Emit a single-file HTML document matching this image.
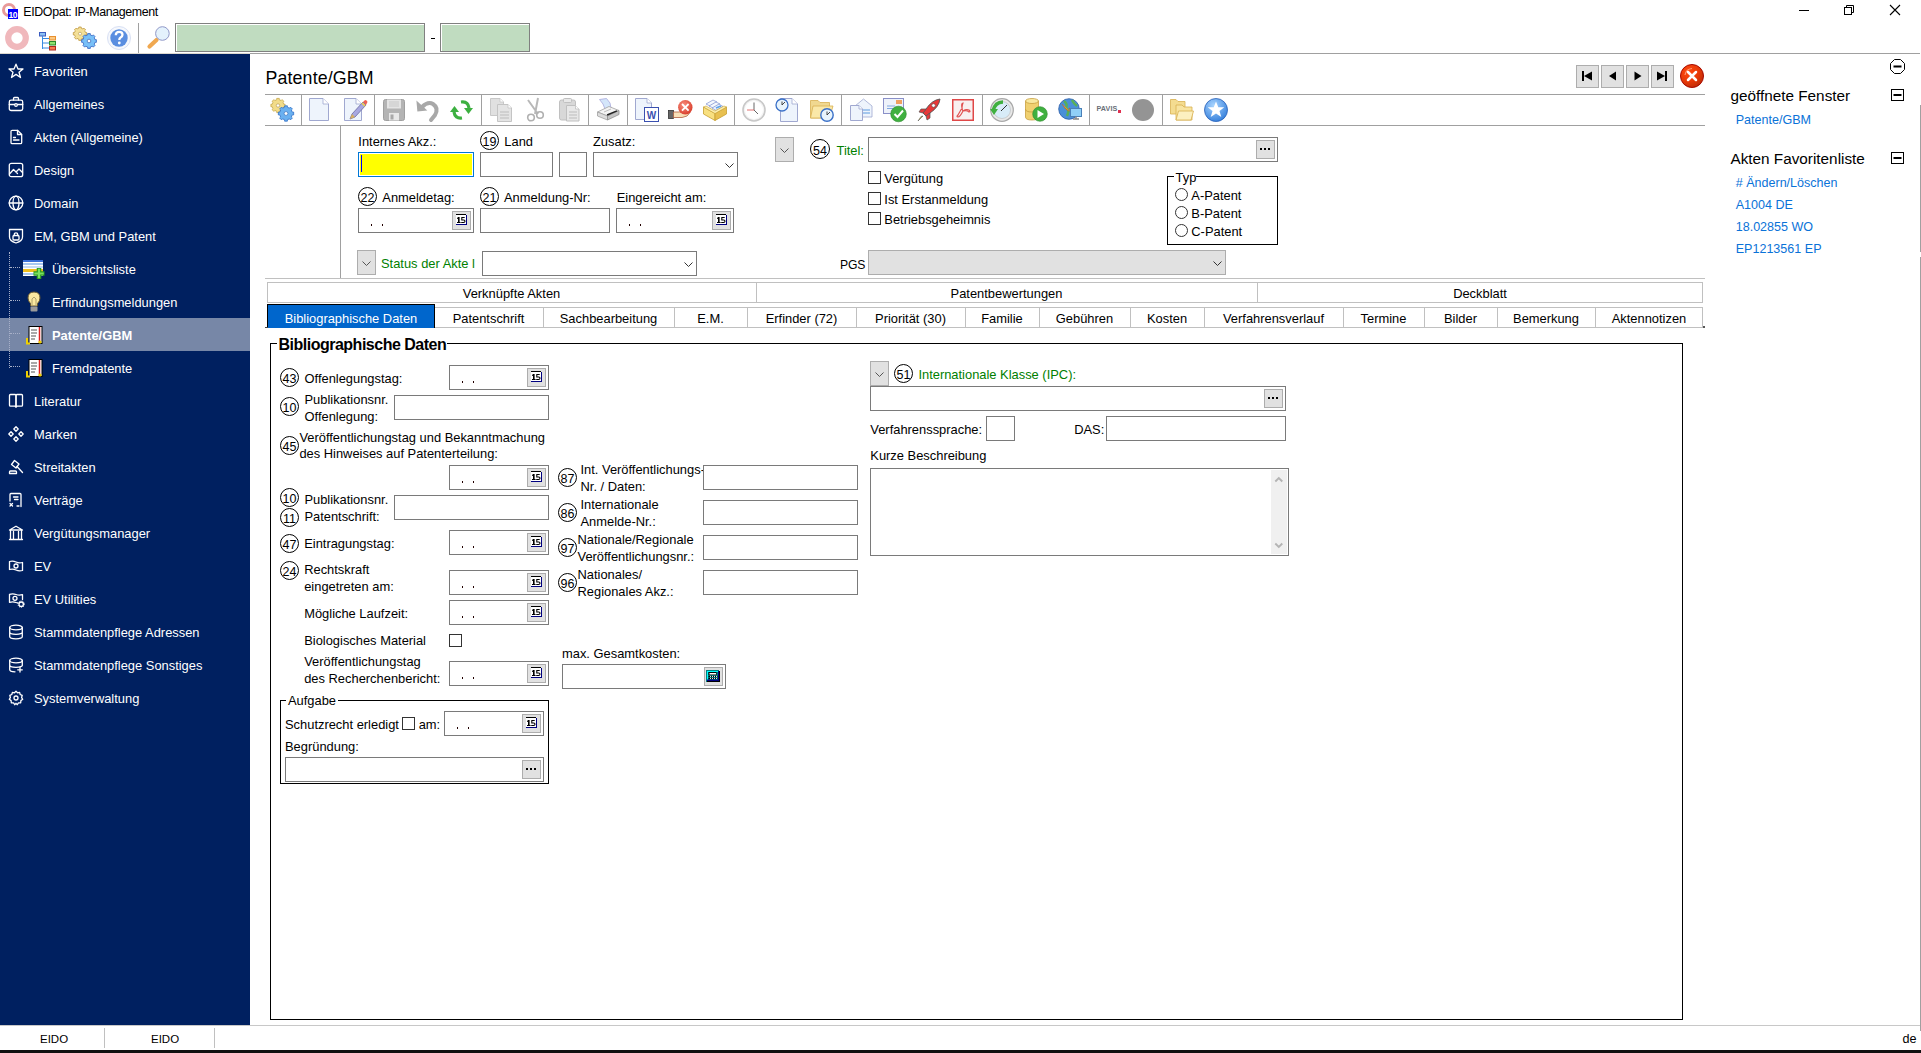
<!DOCTYPE html>
<html><head><meta charset="utf-8"><title>EIDOpat: IP-Management</title>
<style>
html,body{margin:0;padding:0;}
body{width:1921px;height:1053px;overflow:hidden;position:relative;background:#fff;font-family:"Liberation Sans", sans-serif;}
.t{position:absolute;white-space:nowrap;line-height:1;}
.r{position:absolute;box-sizing:border-box;}
svg.r{overflow:visible;}
</style></head><body>
<svg class="r" style="left:2px;top:3px;" width="17" height="17" viewBox="0 0 17 17"><circle cx="7" cy="7" r="5.5" fill="none" stroke="#e89a9a" stroke-width="3"/><rect x="6" y="6" width="10" height="10" fill="#0000ff"/><text x="6.6" y="14.6" font-family="Liberation Sans" font-size="8.5" font-weight="bold" fill="#fff" letter-spacing="-0.6">10</text></svg>
<div class="t " style="left:23.3px;top:5.70px;font-size:12.4px;color:#000;letter-spacing:-0.36px;">EIDOpat: IP-Management</div>
<div class="r" style="left:1799px;top:10px;width:10px;height:1px;background:#000;"></div>
<svg class="r" style="left:1844px;top:5px;" width="11" height="11" viewBox="0 0 11 11"><path d="M2.5 2.5V0.5H9.5V7.5H7.5" fill="none" stroke="#000" stroke-width="1"/><rect x="0.5" y="2.5" width="7" height="7" fill="none" stroke="#000" stroke-width="1"/></svg>
<svg class="r" style="left:1890px;top:5px;" width="11" height="11" viewBox="0 0 11 11"><path d="M0 0L10 10M10 0L0 10" stroke="#000" stroke-width="1.1"/></svg>
<svg class="r" style="left:5px;top:26px;" width="24" height="24" viewBox="0 0 24 24"><circle cx="12" cy="12" r="8.8" fill="none" stroke="#f0b8bc" stroke-width="6.2"/></svg>
<svg class="r" style="left:39px;top:32px;" width="18" height="19" viewBox="0 0 18 19"><rect x="0.5" y="0.5" width="6" height="3.5" fill="#8cc0f4" stroke="#3a5cc0" stroke-width="1"/><path d="M3.5 4V17M3.5 6.5H10M3.5 11H10M3.5 16H10" stroke="#3a8ae0" stroke-width="1"/><rect x="10.5" y="4.5" width="6" height="3.5" fill="#fcc880" stroke="#e89030" stroke-width="1"/><rect x="10.5" y="9.5" width="6" height="3.5" fill="#90e070" stroke="#2a8a2a" stroke-width="1"/><rect x="10.5" y="14.5" width="6" height="3.5" fill="#f87850" stroke="#b02a20" stroke-width="1"/></svg>
<svg class="r" style="left:73px;top:27px;" width="25" height="24" viewBox="0 0 25 24"><path d="M13.69 5.48L13.69 7.92L12.47 7.88L11.71 9.73L12.59 10.57L10.87 12.29L10.03 11.41L8.18 12.17L8.22 13.39L5.78 13.39L5.82 12.17L3.97 11.41L3.13 12.29L1.41 10.57L2.29 9.73L1.53 7.88L0.31 7.92L0.31 5.48L1.53 5.52L2.29 3.67L1.41 2.83L3.13 1.11L3.97 1.99L5.82 1.23L5.78 0.01L8.22 0.01L8.18 1.23L10.03 1.99L10.87 1.11L12.59 2.83L11.71 3.67L12.47 5.52Z" fill="#f4e098" stroke="#c09840" stroke-width="0.8"/><circle cx="7" cy="6.7" r="1.5" fill="#fff" stroke="#a08030" stroke-width="0.5"/><path d="M23.38 12.66L23.38 15.34L22.06 15.31L21.21 17.36L22.17 18.27L20.27 20.17L19.36 19.21L17.31 20.06L17.34 21.38L14.66 21.38L14.69 20.06L12.64 19.21L11.73 20.17L9.83 18.27L10.79 17.36L9.94 15.31L8.62 15.34L8.62 12.66L9.94 12.69L10.79 10.64L9.83 9.73L11.73 7.83L12.64 8.79L14.69 7.94L14.66 6.62L17.34 6.62L17.31 7.94L19.36 8.79L20.27 7.83L22.17 9.73L21.21 10.64L22.06 12.69Z" fill="#78c0f8" stroke="#3060c0" stroke-width="0.8"/><circle cx="16" cy="14" r="1.8" fill="#fff" stroke="#2850a8" stroke-width="0.6"/></svg>
<svg class="r" style="left:107px;top:26px;" width="24" height="24" viewBox="0 0 24 24"><circle cx="12" cy="12" r="11.5" fill="#f6f8fc" stroke="#d8e0f4" stroke-width="1"/><circle cx="12" cy="12" r="8.7" fill="#5a8ee0"/><path d="M8.8 9.3Q8.8 5.8 12.2 5.8Q15.5 5.8 15.5 8.8Q15.5 10.5 13.3 11.7Q12.3 12.3 12.3 14" stroke="#fff" stroke-width="2.3" fill="none"/><circle cx="12.3" cy="17" r="1.4" fill="#fff"/></svg>
<div class="r" style="left:138px;top:23px;width:1px;height:30px;background:#a0a0a0;"></div>
<svg class="r" style="left:147px;top:26px;" width="24" height="24" viewBox="0 0 24 24"><path d="M2.5 20.5L9.5 14" stroke="#f0a850" stroke-width="4.2" stroke-linecap="round"/><circle cx="15.4" cy="7.5" r="6.8" fill="#e4f2fc" stroke="#9098c8" stroke-width="1"/></svg>
<div class="r" style="left:175px;top:23px;width:250px;height:29px;background:#c0dcc0;box-sizing:border-box;border:1px solid #808080;"></div>
<div class="r" style="left:176px;top:24px;width:248px;height:1px;background:#fff;"></div>
<div class="r" style="left:176px;top:24px;width:1px;height:27px;background:#fff;"></div>
<div class="r" style="left:431px;top:38px;width:4px;height:1px;background:#000;"></div>
<div class="r" style="left:440px;top:23px;width:90px;height:29px;background:#c0dcc0;box-sizing:border-box;border:1px solid #808080;"></div>
<div class="r" style="left:441px;top:24px;width:88px;height:1px;background:#fff;"></div>
<div class="r" style="left:441px;top:24px;width:1px;height:27px;background:#fff;"></div>
<div class="r" style="left:250px;top:53px;width:1670px;height:1px;background:#a0a0a0;"></div>
<div class="r" style="left:0px;top:53px;width:250px;height:1px;background:#dcd8d0;"></div>
<div class="r" style="left:0px;top:1025px;width:1921px;height:1px;background:#c8c8c8;"></div>
<div class="t " style="left:40px;top:1034.27px;font-size:11.5px;color:#000;">EIDO</div>
<div class="r" style="left:104px;top:1028px;width:1px;height:20px;background:#c0c0c0;"></div>
<div class="t " style="left:151px;top:1034.27px;font-size:11.5px;color:#000;">EIDO</div>
<div class="r" style="left:214px;top:1028px;width:1px;height:20px;background:#c0c0c0;"></div>
<div class="t " style="left:1902.5px;top:1033.33px;font-size:12.6px;color:#000;">de</div>
<div class="r" style="left:0px;top:1050px;width:1921px;height:3px;background:#101010;"></div>
<div class="r" style="left:1920px;top:105px;width:1px;height:147px;background:#a0a0a0;"></div>
<div class="r" style="left:1920px;top:257px;width:1px;height:774px;background:#a0a0a0;"></div>
<div class="r" style="left:0px;top:54px;width:250px;height:971px;background:#002060;"></div>
<div class="r" style="left:0px;top:318px;width:250px;height:33px;background:#7787a7;"></div>
<div class="r" style="left:9px;top:252px;width:1px;height:116px;border-left:1px dotted #a8b0c8;"></div>
<div class="r" style="left:10px;top:267px;width:10px;height:1px;border-top:1px dotted #a8b0c8;"></div>
<div class="r" style="left:10px;top:300px;width:10px;height:1px;border-top:1px dotted #a8b0c8;"></div>
<div class="r" style="left:10px;top:333px;width:10px;height:1px;border-top:1px dotted #a8b0c8;"></div>
<div class="r" style="left:10px;top:366px;width:10px;height:1px;border-top:1px dotted #a8b0c8;"></div>
<svg class="r" style="left:8px;top:63px;" width="16" height="16" viewBox="0 0 16 16"><path d="M8 1.2L10 6H15L11 9.2L12.5 14.5L8 11.4L3.5 14.5L5 9.2L1 6H6Z" stroke="#fff" stroke-width="1.3" fill="none" stroke-linejoin="round" stroke-linecap="round"/></svg>
<div class="t " style="left:34px;top:66.08px;font-size:12.9px;color:#fff;">Favoriten</div>
<svg class="r" style="left:8px;top:96px;" width="16" height="16" viewBox="0 0 16 16"><path d="M5.5 4V2.5Q5.5 1.5 6.5 1.5H9.5Q10.5 1.5 10.5 2.5V4" stroke="#fff" stroke-width="1.3" fill="none" stroke-linejoin="round" stroke-linecap="round"/><rect x="1.3" y="4.2" width="13.4" height="10.3" rx="1.8" stroke="#fff" stroke-width="1.3" fill="none" stroke-linejoin="round" stroke-linecap="round"/><path d="M1.3 8.5H6.5M9.5 8.5H14.7" stroke="#fff" stroke-width="1.3" fill="none" stroke-linejoin="round" stroke-linecap="round"/><circle cx="8" cy="9" r="1.3" stroke="#fff" stroke-width="1.3" fill="none" stroke-linejoin="round" stroke-linecap="round"/></svg>
<div class="t " style="left:34px;top:99.08px;font-size:12.9px;color:#fff;">Allgemeines</div>
<svg class="r" style="left:8px;top:129px;" width="16" height="16" viewBox="0 0 16 16"><path d="M3 2.5Q3 1.3 4.2 1.3H9.5L13.7 5.5V13.5Q13.7 14.7 12.5 14.7H4.2Q3 14.7 3 13.5Z" stroke="#fff" stroke-width="1.3" fill="none" stroke-linejoin="round" stroke-linecap="round"/><path d="M9.5 1.5V5.5H13.5" stroke="#fff" stroke-width="1.3" fill="none" stroke-linejoin="round" stroke-linecap="round"/><path d="M5.5 8.5H7.5M5.5 11H11" stroke="#fff" stroke-width="1.3" fill="none" stroke-linejoin="round" stroke-linecap="round"/></svg>
<div class="t " style="left:34px;top:132.08px;font-size:12.9px;color:#fff;">Akten (Allgemeine)</div>
<svg class="r" style="left:8px;top:162px;" width="16" height="16" viewBox="0 0 16 16"><rect x="1.3" y="1.3" width="13.4" height="13.4" rx="2" stroke="#fff" stroke-width="1.3" fill="none" stroke-linejoin="round" stroke-linecap="round"/><path d="M1.5 12L5.5 7.5L9.5 11.5M8 10L11 7L14.5 10.5" stroke="#fff" stroke-width="1.3" fill="none" stroke-linejoin="round" stroke-linecap="round"/></svg>
<div class="t " style="left:34px;top:165.08px;font-size:12.9px;color:#fff;">Design</div>
<svg class="r" style="left:8px;top:195px;" width="16" height="16" viewBox="0 0 16 16"><circle cx="8" cy="8" r="6.8" stroke="#fff" stroke-width="1.3" fill="none" stroke-linejoin="round" stroke-linecap="round"/><ellipse cx="8" cy="8" rx="3" ry="6.8" stroke="#fff" stroke-width="1.3" fill="none" stroke-linejoin="round" stroke-linecap="round"/><path d="M1.2 8H14.8" stroke="#fff" stroke-width="1.3" fill="none" stroke-linejoin="round" stroke-linecap="round"/></svg>
<div class="t " style="left:34px;top:198.08px;font-size:12.9px;color:#fff;">Domain</div>
<svg class="r" style="left:8px;top:228px;" width="16" height="16" viewBox="0 0 16 16"><path d="M1.5 1.5H14.5V9Q14.5 13 8 15Q1.5 13 1.5 9Z" stroke="#fff" stroke-width="1.3" fill="none" stroke-linejoin="round" stroke-linecap="round"/><rect x="5" y="7.5" width="6" height="4.5" rx="1" stroke="#fff" stroke-width="1.3" fill="none" stroke-linejoin="round" stroke-linecap="round"/><path d="M6.3 7.5V6.3Q6.3 4.8 8 4.8Q9.7 4.8 9.7 6.3V7.5" stroke="#fff" stroke-width="1.3" fill="none" stroke-linejoin="round" stroke-linecap="round"/></svg>
<div class="t " style="left:34px;top:231.08px;font-size:12.9px;color:#fff;">EM, GBM und Patent</div>
<svg class="r" style="left:23px;top:260px;" width="23" height="20" viewBox="0 0 23 20"><rect x="0" y="0" width="20" height="16" fill="#fff"/><rect x="0" y="0" width="20" height="2" fill="#3a70d8"/><rect x="0" y="3" width="20" height="2" fill="#a8c8f0"/><rect x="0" y="6" width="20" height="2" fill="#c8dcf4"/><rect x="0" y="9" width="20" height="3" fill="#f0c020"/><rect x="0" y="13" width="20" height="2" fill="#a8c8f0"/><path d="M16 8V19M10.5 13.5H21.5" stroke="#2a9a20" stroke-width="4.5"/><path d="M16 8.8V18.2M11.3 13.5H20.7" stroke="#7ae060" stroke-width="2.2"/></svg>
<div class="t " style="left:52px;top:264.08px;font-size:12.9px;color:#fff;">Übersichtsliste</div>
<svg class="r" style="left:27px;top:291px;" width="14" height="23" viewBox="0 0 14 23"><path d="M7 1Q13 1 13 7Q13 10 10.5 12.5V15H3.5V12.5Q1 10 1 7Q1 1 7 1Z" fill="#fbe9a0" stroke="#6a5a30" stroke-width="1"/><path d="M5 14V8L7 6L9 8V14" stroke="#a09060" fill="none" stroke-width="0.8"/><rect x="3.5" y="15.5" width="7" height="5" rx="1" fill="#9a9a9a"/></svg>
<div class="t " style="left:52px;top:297.08px;font-size:12.9px;color:#fff;">Erfindungsmeldungen</div>
<svg class="r" style="left:26px;top:326px;" width="18" height="19" viewBox="0 0 18 19"><rect x="3" y="0.5" width="13" height="17" fill="#fff" stroke="#000" stroke-width="1"/><path d="M13.5 1V17" stroke="#e02020" stroke-width="1.5"/><path d="M5 4H11M5 7H11M5 10H10M5 13H9" stroke="#555" stroke-width="1.2"/><path d="M1 12V17.5H4" stroke="#f0d000" stroke-width="2" fill="none"/><circle cx="14" cy="16" r="1.6" fill="#f0d000"/></svg>
<div class="t " style="left:52px;top:330.08px;font-size:12.9px;color:#fff;font-weight:bold;">Patente/GBM</div>
<svg class="r" style="left:26px;top:359px;" width="18" height="19" viewBox="0 0 18 19"><rect x="3" y="0.5" width="13" height="17" fill="#fff" stroke="#000" stroke-width="1"/><path d="M13.5 1V17" stroke="#e02020" stroke-width="1.5"/><path d="M5 4H11M5 7H11M5 10H10M5 13H9" stroke="#555" stroke-width="1.2"/><path d="M1 12V17.5H4" stroke="#f0d000" stroke-width="2" fill="none"/><circle cx="14" cy="16" r="1.6" fill="#f0d000"/></svg>
<div class="t " style="left:52px;top:363.08px;font-size:12.9px;color:#fff;">Fremdpatente</div>
<svg class="r" style="left:8px;top:393px;" width="16" height="16" viewBox="0 0 16 16"><path d="M1.5 2.5Q1.5 1.5 2.5 1.5H7.2Q8 1.5 8 2.5V14L7 13.2H2.5Q1.5 13.2 1.5 12.2Z" stroke="#fff" stroke-width="1.3" fill="none" stroke-linejoin="round" stroke-linecap="round"/><path d="M14.5 2.5Q14.5 1.5 13.5 1.5H8.8Q8 1.5 8 2.5V14L9 13.2H13.5Q14.5 13.2 14.5 12.2Z" stroke="#fff" stroke-width="1.3" fill="none" stroke-linejoin="round" stroke-linecap="round"/></svg>
<div class="t " style="left:34px;top:396.08px;font-size:12.9px;color:#fff;">Literatur</div>
<svg class="r" style="left:8px;top:426px;" width="16" height="16" viewBox="0 0 16 16"><path d="M8 0.8L10.2 3L8 5.2L5.8 3Z M8 10.8L10.2 13L8 15.2L5.8 13Z M3 5.8L5.2 8L3 10.2L0.8 8Z M13 5.8L15.2 8L13 10.2L10.8 8Z" stroke="#fff" stroke-width="1.3" fill="none" stroke-linejoin="round" stroke-linecap="round"/></svg>
<div class="t " style="left:34px;top:429.08px;font-size:12.9px;color:#fff;">Marken</div>
<svg class="r" style="left:8px;top:459px;" width="16" height="16" viewBox="0 0 16 16"><path d="M6.5 1.5L11 5L8 9L3.5 5.5Z" stroke="#fff" stroke-width="1.3" fill="none" stroke-linejoin="round" stroke-linecap="round"/><path d="M9 7.5L14.5 13.5" stroke="#fff" stroke-width="1.3" fill="none" stroke-linejoin="round" stroke-linecap="round"/><path d="M1.5 14.5H8.5V13Q8.5 12 7.5 12H2.5Q1.5 12 1.5 13Z" stroke="#fff" stroke-width="1.3" fill="none" stroke-linejoin="round" stroke-linecap="round"/></svg>
<div class="t " style="left:34px;top:462.08px;font-size:12.9px;color:#fff;">Streitakten</div>
<svg class="r" style="left:8px;top:492px;" width="16" height="16" viewBox="0 0 16 16"><path d="M2 9V2.5Q2 1.5 3 1.5H12Q13 1.5 13 2.5V14.5" stroke="#fff" stroke-width="1.3" fill="none" stroke-linejoin="round" stroke-linecap="round"/><path d="M5.5 5H10M6.5 7.5H10M9 14H11" stroke="#fff" stroke-width="1.3" fill="none" stroke-linejoin="round" stroke-linecap="round"/><path d="M2 11.5L4.5 14M4.5 11.5L2 14" stroke="#fff" stroke-width="1.3" fill="none" stroke-linejoin="round" stroke-linecap="round"/></svg>
<div class="t " style="left:34px;top:495.08px;font-size:12.9px;color:#fff;">Verträge</div>
<svg class="r" style="left:8px;top:525px;" width="16" height="16" viewBox="0 0 16 16"><path d="M1.5 5L8 1.2L14.5 5Z" stroke="#fff" stroke-width="1.3" fill="none" stroke-linejoin="round" stroke-linecap="round"/><path d="M1.5 14.5H14.5M2.5 5.5V14M5.5 6.5V14M10.5 6.5V14M13.5 5.5V14" stroke="#fff" stroke-width="1.3" fill="none" stroke-linejoin="round" stroke-linecap="round"/></svg>
<div class="t " style="left:34px;top:528.08px;font-size:12.9px;color:#fff;">Vergütungsmanager</div>
<svg class="r" style="left:8px;top:558px;" width="16" height="16" viewBox="0 0 16 16"><path d="M1.5 3.5Q5 2.5 8 4Q11 5.5 14.5 4.5V12.5Q11 13.5 8 12Q5 10.5 1.5 11.5Z" stroke="#fff" stroke-width="1.3" fill="none" stroke-linejoin="round" stroke-linecap="round"/><circle cx="8" cy="8" r="2" stroke="#fff" stroke-width="1.3" fill="none" stroke-linejoin="round" stroke-linecap="round"/></svg>
<div class="t " style="left:34px;top:561.08px;font-size:12.9px;color:#fff;">EV</div>
<svg class="r" style="left:8px;top:591px;" width="16" height="16" viewBox="0 0 16 16"><path d="M10 11.8Q9 11.9 8 11.5Q5 10.3 1.5 11.3V3.3Q5 2.3 8 3.5Q11 4.7 14.5 3.7V8.5" stroke="#fff" stroke-width="1.3" fill="none" stroke-linejoin="round" stroke-linecap="round"/><circle cx="7" cy="7.3" r="2" stroke="#fff" stroke-width="1.3" fill="none" stroke-linejoin="round" stroke-linecap="round"/><circle cx="13.2" cy="13.2" r="2.2" stroke="#fff" stroke-width="1.3" fill="none" stroke-linejoin="round" stroke-linecap="round"/><circle cx="13.2" cy="13.2" r="3.2" stroke="#fff" stroke-width="1" fill="none" stroke-dasharray="1 1"/></svg>
<div class="t " style="left:34px;top:594.08px;font-size:12.9px;color:#fff;">EV Utilities</div>
<svg class="r" style="left:8px;top:624px;" width="16" height="16" viewBox="0 0 16 16"><ellipse cx="8" cy="3.5" rx="6.3" ry="2.3" stroke="#fff" stroke-width="1.3" fill="none" stroke-linejoin="round" stroke-linecap="round"/><path d="M1.7 3.5V12.5Q1.7 14.8 8 14.8Q14.3 14.8 14.3 12.5V3.5M1.7 8Q1.7 10.3 8 10.3Q14.3 10.3 14.3 8" stroke="#fff" stroke-width="1.3" fill="none" stroke-linejoin="round" stroke-linecap="round"/></svg>
<div class="t " style="left:34px;top:627.08px;font-size:12.9px;color:#fff;">Stammdatenpflege Adressen</div>
<svg class="r" style="left:8px;top:657px;" width="16" height="16" viewBox="0 0 16 16"><ellipse cx="8" cy="3.5" rx="6.3" ry="2.3" stroke="#fff" stroke-width="1.3" fill="none" stroke-linejoin="round" stroke-linecap="round"/><path d="M1.7 3.5V12.5Q1.7 14.8 7 14.8M14.3 3.5V8.5M1.7 8Q1.7 10.3 8 10.3Q14.3 10.3 14.3 8" stroke="#fff" stroke-width="1.3" fill="none" stroke-linejoin="round" stroke-linecap="round"/><path d="M12 10.5V15M9.7 12.8H14.3" stroke="#fff" stroke-width="1.3" fill="none" stroke-linejoin="round" stroke-linecap="round"/></svg>
<div class="t " style="left:34px;top:660.08px;font-size:12.9px;color:#fff;">Stammdatenpflege Sonstiges</div>
<svg class="r" style="left:8px;top:690px;" width="16" height="16" viewBox="0 0 16 16"><path d="M8 1.3L9.5 2.8L11.6 2.4L12.2 4.5L14.2 5.4L13.6 7.5L14.7 9.3L12.9 10.6L12.7 12.8L10.5 12.9L9.2 14.7L8 13.3L6.8 14.7L5.5 12.9L3.3 12.8L3.1 10.6L1.3 9.3L2.4 7.5L1.8 5.4L3.8 4.5L4.4 2.4L6.5 2.8Z" stroke="#fff" stroke-width="1.3" fill="none" stroke-linejoin="round" stroke-linecap="round"/><circle cx="8" cy="8" r="2" stroke="#fff" stroke-width="1.3" fill="none" stroke-linejoin="round" stroke-linecap="round"/></svg>
<div class="t " style="left:34px;top:693.08px;font-size:12.9px;color:#fff;">Systemverwaltung</div>
<div class="t " style="left:265.5px;top:69.97px;font-size:17.75px;color:#000;letter-spacing:0.15px;">Patente/GBM</div>
<div class="r" style="left:1576px;top:65px;width:23px;height:23px;background:#e1e1e1;box-sizing:border-box;border:1px solid #adadad;"></div>
<svg class="r" style="left:1582px;top:70px;" width="12" height="12" viewBox="0 0 12 12"><rect x="0" y="1" width="2" height="10" fill="#000"/><path d="M2 6L10 1.5V10.5Z" fill="#000"/></svg>
<div class="r" style="left:1601px;top:65px;width:23px;height:23px;background:#e1e1e1;box-sizing:border-box;border:1px solid #adadad;"></div>
<svg class="r" style="left:1608px;top:70px;" width="12" height="12" viewBox="0 0 12 12"><path d="M1 6L8 1.5V10.5Z" fill="#000"/></svg>
<div class="r" style="left:1626px;top:65px;width:23px;height:23px;background:#e1e1e1;box-sizing:border-box;border:1px solid #adadad;"></div>
<svg class="r" style="left:1634px;top:70px;" width="12" height="12" viewBox="0 0 12 12"><path d="M7.5 6L0.5 1.5V10.5Z" fill="#000"/></svg>
<div class="r" style="left:1651px;top:65px;width:23px;height:23px;background:#e1e1e1;box-sizing:border-box;border:1px solid #adadad;"></div>
<svg class="r" style="left:1657px;top:70px;" width="12" height="12" viewBox="0 0 12 12"><path d="M8 6L0 1.5V10.5Z" fill="#000"/><rect x="8" y="1" width="2" height="10" fill="#000"/></svg>
<svg class="r" style="left:1680px;top:64px;" width="24" height="24" viewBox="0 0 24 24"><defs><radialGradient id="rg1" cx="0.35" cy="0.3" r="0.8"><stop offset="0" stop-color="#ff4a10"/><stop offset="0.55" stop-color="#e83a08"/><stop offset="1" stop-color="#b82a08"/></radialGradient></defs><circle cx="12" cy="12" r="11.5" fill="url(#rg1)" stroke="#a80a00" stroke-width="1"/><path d="M5 11Q6 5 12 4.5" stroke="#ffb090" stroke-width="1.2" fill="none" opacity="0.8"/><path d="M8 8L16 16M16 8L8 16" stroke="#fff" stroke-width="2.5" stroke-linecap="round"/></svg>
<div class="r" style="left:265px;top:94px;width:1440px;height:1px;background:#a0a0a0;"></div>
<div class="r" style="left:265px;top:125px;width:1440px;height:1px;background:#a0a0a0;"></div>
<div class="r" style="left:301px;top:95px;width:1px;height:30px;background:#a0a0a0;"></div>
<div class="r" style="left:374px;top:95px;width:1px;height:30px;background:#a0a0a0;"></div>
<div class="r" style="left:481px;top:95px;width:1px;height:30px;background:#a0a0a0;"></div>
<div class="r" style="left:588px;top:95px;width:1px;height:30px;background:#a0a0a0;"></div>
<div class="r" style="left:627px;top:95px;width:1px;height:30px;background:#a0a0a0;"></div>
<div class="r" style="left:734px;top:95px;width:1px;height:30px;background:#a0a0a0;"></div>
<div class="r" style="left:841px;top:95px;width:1px;height:30px;background:#a0a0a0;"></div>
<div class="r" style="left:982px;top:95px;width:1px;height:30px;background:#a0a0a0;"></div>
<div class="r" style="left:1089px;top:95px;width:1px;height:30px;background:#a0a0a0;"></div>
<div class="r" style="left:1162px;top:95px;width:1px;height:30px;background:#a0a0a0;"></div>
<div class="r" style="left:340px;top:126px;width:1px;height:152px;background:#a0a0a0;"></div>
<div class="r" style="left:265px;top:278px;width:1440px;height:1px;background:#c0c0c0;"></div>
<div class="t " style="left:358.3px;top:136.08px;font-size:12.9px;color:#000;">Internes Akz.:</div>
<div class="r" style="left:358px;top:152px;width:116px;height:25px;background:#ffff00;box-sizing:border-box;border:1px solid #0078d7;"></div>
<div class="r" style="left:359px;top:153px;width:114px;height:1px;background:#fff;"></div>
<div class="r" style="left:359px;top:175px;width:114px;height:1px;background:#fff;"></div>
<div class="r" style="left:359px;top:153px;width:1px;height:23px;background:#fff;"></div>
<div class="r" style="left:472px;top:153px;width:1px;height:23px;background:#fff;"></div>
<div class="r" style="left:361px;top:155px;width:1px;height:17px;background:#0000ff;"></div>
<svg class="r" style="left:480px;top:131px;" width="19" height="19" viewBox="0 0 19 19"><circle cx="9.5" cy="9.5" r="9.0" fill="none" stroke="#000" stroke-width="1"/></svg>
<div class="t" style="left:476px;width:27px;text-align:center;top:135.92px;font-size:12.5px;color:#000;">19</div>
<div class="t " style="left:504.3px;top:136.08px;font-size:12.9px;color:#000;">Land</div>
<div class="r" style="left:480px;top:152px;width:73px;height:25px;background:#fff;box-sizing:border-box;border:1px solid #7a7a7a;"></div>
<div class="r" style="left:559px;top:152px;width:28px;height:25px;background:#fff;box-sizing:border-box;border:1px solid #7a7a7a;"></div>
<div class="t " style="left:593px;top:136.08px;font-size:12.9px;color:#000;">Zusatz:</div>
<div class="r" style="left:593px;top:152px;width:145px;height:25px;background:#fff;box-sizing:border-box;border:1px solid #7a7a7a;"></div>
<svg class="r" style="left:725px;top:163px;" width="9" height="6" viewBox="0 0 9 6"><path d="M0.5 0.5L4.5 4.5L8.5 0.5" stroke="#333" stroke-width="1" fill="none"/></svg>
<svg class="r" style="left:358px;top:187px;" width="19" height="19" viewBox="0 0 19 19"><circle cx="9.5" cy="9.5" r="9.0" fill="none" stroke="#000" stroke-width="1"/></svg>
<div class="t" style="left:354px;width:27px;text-align:center;top:191.92px;font-size:12.5px;color:#000;">22</div>
<div class="t " style="left:382.3px;top:192.08px;font-size:12.9px;color:#000;">Anmeldetag:</div>
<div class="r" style="left:358px;top:208px;width:116px;height:25px;background:#fff;box-sizing:border-box;border:1px solid #7a7a7a;"></div>
<div class="r" style="left:371px;top:224px;width:1px;height:2px;background:#200;"></div>
<div class="r" style="left:382px;top:224px;width:1px;height:2px;background:#200;"></div>
<div class="r" style="left:452px;top:211px;width:19px;height:19px;background:#e1e1e1;box-sizing:border-box;border:1px solid #adadad;"></div>
<svg class="r" style="left:456px;top:214px;" width="12" height="12" viewBox="0 0 12 12"><rect x="0" y="0" width="10" height="1" fill="#000"/><rect x="0" y="1" width="10" height="9" fill="#fff"/><rect x="10" y="1" width="1" height="10" fill="#000080"/><rect x="0" y="10" width="11" height="1" fill="#000080"/><rect x="2" y="3" width="1.6" height="6" fill="#000"/><rect x="1" y="3.6" width="1.2" height="1.2" fill="#000"/><rect x="1" y="8" width="3.6" height="1" fill="#000"/><path d="M5.3 3.5H8.7M5.8 3.5V6H7.8Q9 6 9 7.3Q9 8.5 7.6 8.5H5.2" stroke="#000" stroke-width="1.1" fill="none"/></svg>
<svg class="r" style="left:480px;top:187px;" width="19" height="19" viewBox="0 0 19 19"><circle cx="9.5" cy="9.5" r="9.0" fill="none" stroke="#000" stroke-width="1"/></svg>
<div class="t" style="left:476px;width:27px;text-align:center;top:191.92px;font-size:12.5px;color:#000;">21</div>
<div class="t " style="left:504px;top:192.08px;font-size:12.9px;color:#000;">Anmeldung-Nr:</div>
<div class="r" style="left:480px;top:208px;width:130px;height:25px;background:#fff;box-sizing:border-box;border:1px solid #7a7a7a;"></div>
<div class="t " style="left:616.7px;top:192.08px;font-size:12.9px;color:#000;">Eingereicht am:</div>
<div class="r" style="left:616px;top:208px;width:118px;height:25px;background:#fff;box-sizing:border-box;border:1px solid #7a7a7a;"></div>
<div class="r" style="left:629px;top:224px;width:1px;height:2px;background:#200;"></div>
<div class="r" style="left:640px;top:224px;width:1px;height:2px;background:#200;"></div>
<div class="r" style="left:712px;top:211px;width:19px;height:19px;background:#e1e1e1;box-sizing:border-box;border:1px solid #adadad;"></div>
<svg class="r" style="left:716px;top:214px;" width="12" height="12" viewBox="0 0 12 12"><rect x="0" y="0" width="10" height="1" fill="#000"/><rect x="0" y="1" width="10" height="9" fill="#fff"/><rect x="10" y="1" width="1" height="10" fill="#000080"/><rect x="0" y="10" width="11" height="1" fill="#000080"/><rect x="2" y="3" width="1.6" height="6" fill="#000"/><rect x="1" y="3.6" width="1.2" height="1.2" fill="#000"/><rect x="1" y="8" width="3.6" height="1" fill="#000"/><path d="M5.3 3.5H8.7M5.8 3.5V6H7.8Q9 6 9 7.3Q9 8.5 7.6 8.5H5.2" stroke="#000" stroke-width="1.1" fill="none"/></svg>
<div class="r" style="left:357px;top:250px;width:19px;height:25px;background:#e1e1e1;box-sizing:border-box;border:1px solid #adadad;"></div>
<svg class="r" style="left:362px;top:261px;" width="9" height="6" viewBox="0 0 9 6"><path d="M0.5 0.5L4.5 4.5L8.5 0.5" stroke="#555" stroke-width="1" fill="none"/></svg>
<div class="t " style="left:381px;top:258.08px;font-size:12.9px;color:#008000;">Status der Akte l</div>
<div class="r" style="left:482px;top:251px;width:215px;height:25px;background:#fff;box-sizing:border-box;border:1px solid #7a7a7a;"></div>
<svg class="r" style="left:684px;top:262px;" width="9" height="6" viewBox="0 0 9 6"><path d="M0.5 0.5L4.5 4.5L8.5 0.5" stroke="#333" stroke-width="1" fill="none"/></svg>
<div class="r" style="left:775px;top:137px;width:19px;height:25px;background:#e1e1e1;box-sizing:border-box;border:1px solid #adadad;"></div>
<svg class="r" style="left:780px;top:148px;" width="9" height="6" viewBox="0 0 9 6"><path d="M0.5 0.5L4.5 4.5L8.5 0.5" stroke="#555" stroke-width="1" fill="none"/></svg>
<svg class="r" style="left:810px;top:139px;" width="20" height="20" viewBox="0 0 20 20"><circle cx="10.0" cy="10.0" r="9.5" fill="none" stroke="#000" stroke-width="1"/></svg>
<div class="t" style="left:806px;width:28px;text-align:center;top:144.92px;font-size:12.5px;color:#000;">54</div>
<div class="t " style="left:836.5px;top:145.08px;font-size:12.9px;color:#008000;">Titel:</div>
<div class="r" style="left:868px;top:137px;width:410px;height:25px;background:#fff;box-sizing:border-box;border:1px solid #7a7a7a;"></div>
<div class="r" style="left:1256px;top:140px;width:19px;height:19px;background:#e1e1e1;box-sizing:border-box;border:1px solid #adadad;"></div>
<div class="r" style="left:1260px;top:148px;width:2px;height:2px;background:#000;"></div>
<div class="r" style="left:1264px;top:148px;width:2px;height:2px;background:#000;"></div>
<div class="r" style="left:1268px;top:148px;width:2px;height:2px;background:#000;"></div>
<div class="r" style="left:868px;top:171px;width:13px;height:13px;background:#fff;box-sizing:border-box;border:1px solid #333;"></div>
<div class="t " style="left:884.3px;top:173.08px;font-size:12.9px;color:#000;">Vergütung</div>
<div class="r" style="left:868px;top:192px;width:13px;height:13px;background:#fff;box-sizing:border-box;border:1px solid #333;"></div>
<div class="t " style="left:884.3px;top:194.08px;font-size:12.9px;color:#000;">Ist Erstanmeldung</div>
<div class="r" style="left:868px;top:212px;width:13px;height:13px;background:#fff;box-sizing:border-box;border:1px solid #333;"></div>
<div class="t " style="left:884.3px;top:214.08px;font-size:12.9px;color:#000;">Betriebsgeheimnis</div>
<div class="r" style="left:1167px;top:176px;width:111px;height:69px;box-sizing:border-box;border:1px solid #000;"></div>
<div class="r" style="left:1174px;top:172px;width:22px;height:10px;background:#fff;"></div>
<div class="t " style="left:1175.6px;top:172.08px;font-size:12.9px;color:#000;">Typ</div>
<svg class="r" style="left:1175px;top:188px;" width="13" height="13" viewBox="0 0 13 13"><circle cx="6.5" cy="6.5" r="6.0" fill="#fff" stroke="#333" stroke-width="1"/></svg>
<div class="t " style="left:1191.3px;top:190.08px;font-size:12.9px;color:#000;">A-Patent</div>
<svg class="r" style="left:1175px;top:206px;" width="13" height="13" viewBox="0 0 13 13"><circle cx="6.5" cy="6.5" r="6.0" fill="#fff" stroke="#333" stroke-width="1"/></svg>
<div class="t " style="left:1191.3px;top:208.08px;font-size:12.9px;color:#000;">B-Patent</div>
<svg class="r" style="left:1175px;top:224px;" width="13" height="13" viewBox="0 0 13 13"><circle cx="6.5" cy="6.5" r="6.0" fill="#fff" stroke="#333" stroke-width="1"/></svg>
<div class="t " style="left:1191.3px;top:226.08px;font-size:12.9px;color:#000;">C-Patent</div>
<div class="t " style="left:840px;top:259.17px;font-size:12.2px;color:#000;letter-spacing:-0.2px;">PGS</div>
<div class="r" style="left:868px;top:250px;width:358px;height:25px;background:#e1e1e1;box-sizing:border-box;border:1px solid #adadad;"></div>
<svg class="r" style="left:1213px;top:261px;" width="9" height="6" viewBox="0 0 9 6"><path d="M0.5 0.5L4.5 4.5L8.5 0.5" stroke="#333" stroke-width="1" fill="none"/></svg>
<div class="r" style="left:267px;top:282px;width:1436px;height:21px;box-sizing:border-box;border:1px solid #c0c0c0;"></div>
<div class="r" style="left:756px;top:282px;width:1px;height:21px;background:#c0c0c0;"></div>
<div class="r" style="left:1257px;top:282px;width:1px;height:21px;background:#c0c0c0;"></div>
<div class="t" style="left:267px;width:489px;text-align:center;top:288.08px;font-size:12.9px;color:#000;">Verknüpfte Akten</div>
<div class="t" style="left:756px;width:501px;text-align:center;top:288.08px;font-size:12.9px;color:#000;">Patentbewertungen</div>
<div class="t" style="left:1257px;width:446px;text-align:center;top:288.08px;font-size:12.9px;color:#000;">Deckblatt</div>
<div class="r" style="left:267px;top:307px;width:1436px;height:21px;box-sizing:border-box;border:1px solid #c0c0c0;"></div>
<div class="r" style="left:1703px;top:326px;width:2px;height:2px;background:#555;"></div>
<div class="r" style="left:267px;top:304px;width:168px;height:24px;background:#0066cc;box-sizing:border-box;border:1px solid #000;border-bottom:none;"></div>
<div class="r" style="left:265px;top:327px;width:3px;height:1px;background:#444;"></div>
<div class="t" style="left:267px;width:168px;text-align:center;top:313.08px;font-size:12.9px;color:#fff;">Bibliographische Daten</div>
<div class="t" style="left:434px;width:109px;text-align:center;top:313.08px;font-size:12.9px;color:#000;">Patentschrift</div>
<div class="r" style="left:543px;top:307px;width:1px;height:21px;background:#c0c0c0;"></div>
<div class="t" style="left:543px;width:131px;text-align:center;top:313.08px;font-size:12.9px;color:#000;">Sachbearbeitung</div>
<div class="r" style="left:674px;top:307px;width:1px;height:21px;background:#c0c0c0;"></div>
<div class="t" style="left:674px;width:73px;text-align:center;top:313.08px;font-size:12.9px;color:#000;">E.M.</div>
<div class="r" style="left:747px;top:307px;width:1px;height:21px;background:#c0c0c0;"></div>
<div class="t" style="left:747px;width:109px;text-align:center;top:313.08px;font-size:12.9px;color:#000;">Erfinder (72)</div>
<div class="r" style="left:856px;top:307px;width:1px;height:21px;background:#c0c0c0;"></div>
<div class="t" style="left:856px;width:109px;text-align:center;top:313.08px;font-size:12.9px;color:#000;">Priorität (30)</div>
<div class="r" style="left:965px;top:307px;width:1px;height:21px;background:#c0c0c0;"></div>
<div class="t" style="left:965px;width:74px;text-align:center;top:313.08px;font-size:12.9px;color:#000;">Familie</div>
<div class="r" style="left:1039px;top:307px;width:1px;height:21px;background:#c0c0c0;"></div>
<div class="t" style="left:1039px;width:91px;text-align:center;top:313.08px;font-size:12.9px;color:#000;">Gebühren</div>
<div class="r" style="left:1130px;top:307px;width:1px;height:21px;background:#c0c0c0;"></div>
<div class="t" style="left:1130px;width:74px;text-align:center;top:313.08px;font-size:12.9px;color:#000;">Kosten</div>
<div class="r" style="left:1204px;top:307px;width:1px;height:21px;background:#c0c0c0;"></div>
<div class="t" style="left:1204px;width:139px;text-align:center;top:313.08px;font-size:12.9px;color:#000;">Verfahrensverlauf</div>
<div class="r" style="left:1343px;top:307px;width:1px;height:21px;background:#c0c0c0;"></div>
<div class="t" style="left:1343px;width:81px;text-align:center;top:313.08px;font-size:12.9px;color:#000;">Termine</div>
<div class="r" style="left:1424px;top:307px;width:1px;height:21px;background:#c0c0c0;"></div>
<div class="t" style="left:1424px;width:73px;text-align:center;top:313.08px;font-size:12.9px;color:#000;">Bilder</div>
<div class="r" style="left:1497px;top:307px;width:1px;height:21px;background:#c0c0c0;"></div>
<div class="t" style="left:1497px;width:98px;text-align:center;top:313.08px;font-size:12.9px;color:#000;">Bemerkung</div>
<div class="r" style="left:1595px;top:307px;width:1px;height:21px;background:#c0c0c0;"></div>
<div class="t" style="left:1595px;width:108px;text-align:center;top:313.08px;font-size:12.9px;color:#000;">Aktennotizen</div>
<div class="r" style="left:270px;top:343px;width:1413px;height:677px;box-sizing:border-box;border:1px solid #000;"></div>
<div class="r" style="left:277px;top:336px;width:170px;height:14px;background:#fff;"></div>
<div class="t " style="left:278.5px;top:336.76px;font-size:16px;color:#000;font-weight:bold;letter-spacing:-0.5px;">Bibliographische Daten</div>
<svg class="r" style="left:280px;top:368px;" width="19" height="19" viewBox="0 0 19 19"><circle cx="9.5" cy="9.5" r="9.0" fill="none" stroke="#000" stroke-width="1"/></svg>
<div class="t" style="left:276px;width:27px;text-align:center;top:372.92px;font-size:12.5px;color:#000;">43</div>
<div class="t " style="left:304.5px;top:373.08px;font-size:12.9px;color:#000;">Offenlegungstag:</div>
<div class="r" style="left:449px;top:365px;width:100px;height:25px;background:#fff;box-sizing:border-box;border:1px solid #7a7a7a;"></div>
<div class="r" style="left:462px;top:381px;width:1px;height:2px;background:#200;"></div>
<div class="r" style="left:473px;top:381px;width:1px;height:2px;background:#200;"></div>
<div class="r" style="left:527px;top:368px;width:19px;height:19px;background:#e1e1e1;box-sizing:border-box;border:1px solid #adadad;"></div>
<svg class="r" style="left:531px;top:371px;" width="12" height="12" viewBox="0 0 12 12"><rect x="0" y="0" width="10" height="1" fill="#000"/><rect x="0" y="1" width="10" height="9" fill="#fff"/><rect x="10" y="1" width="1" height="10" fill="#000080"/><rect x="0" y="10" width="11" height="1" fill="#000080"/><rect x="2" y="3" width="1.6" height="6" fill="#000"/><rect x="1" y="3.6" width="1.2" height="1.2" fill="#000"/><rect x="1" y="8" width="3.6" height="1" fill="#000"/><path d="M5.3 3.5H8.7M5.8 3.5V6H7.8Q9 6 9 7.3Q9 8.5 7.6 8.5H5.2" stroke="#000" stroke-width="1.1" fill="none"/></svg>
<svg class="r" style="left:280px;top:397px;" width="19" height="19" viewBox="0 0 19 19"><circle cx="9.5" cy="9.5" r="9.0" fill="none" stroke="#000" stroke-width="1"/></svg>
<div class="t" style="left:276px;width:27px;text-align:center;top:401.92px;font-size:12.5px;color:#000;">10</div>
<div class="t " style="left:304.5px;top:394.08px;font-size:12.9px;color:#000;">Publikationsnr.</div>
<div class="t " style="left:304.5px;top:411.08px;font-size:12.9px;color:#000;">Offenlegung:</div>
<div class="r" style="left:394px;top:395px;width:155px;height:25px;background:#fff;box-sizing:border-box;border:1px solid #7a7a7a;"></div>
<svg class="r" style="left:280px;top:436px;" width="19" height="19" viewBox="0 0 19 19"><circle cx="9.5" cy="9.5" r="9.0" fill="none" stroke="#000" stroke-width="1"/></svg>
<div class="t" style="left:276px;width:27px;text-align:center;top:440.92px;font-size:12.5px;color:#000;">45</div>
<div class="t " style="left:299.4px;top:431.58px;font-size:12.9px;color:#000;">Veröffentlichungstag und Bekanntmachung</div>
<div class="t " style="left:299.4px;top:448.38px;font-size:12.9px;color:#000;">des Hinweises auf Patenterteilung:</div>
<div class="r" style="left:449px;top:465px;width:100px;height:25px;background:#fff;box-sizing:border-box;border:1px solid #7a7a7a;"></div>
<div class="r" style="left:462px;top:481px;width:1px;height:2px;background:#200;"></div>
<div class="r" style="left:473px;top:481px;width:1px;height:2px;background:#200;"></div>
<div class="r" style="left:527px;top:468px;width:19px;height:19px;background:#e1e1e1;box-sizing:border-box;border:1px solid #adadad;"></div>
<svg class="r" style="left:531px;top:471px;" width="12" height="12" viewBox="0 0 12 12"><rect x="0" y="0" width="10" height="1" fill="#000"/><rect x="0" y="1" width="10" height="9" fill="#fff"/><rect x="10" y="1" width="1" height="10" fill="#000080"/><rect x="0" y="10" width="11" height="1" fill="#000080"/><rect x="2" y="3" width="1.6" height="6" fill="#000"/><rect x="1" y="3.6" width="1.2" height="1.2" fill="#000"/><rect x="1" y="8" width="3.6" height="1" fill="#000"/><path d="M5.3 3.5H8.7M5.8 3.5V6H7.8Q9 6 9 7.3Q9 8.5 7.6 8.5H5.2" stroke="#000" stroke-width="1.1" fill="none"/></svg>
<svg class="r" style="left:280px;top:488px;" width="19" height="19" viewBox="0 0 19 19"><circle cx="9.5" cy="9.5" r="9.0" fill="none" stroke="#000" stroke-width="1"/></svg>
<div class="t" style="left:276px;width:27px;text-align:center;top:492.92px;font-size:12.5px;color:#000;">10</div>
<svg class="r" style="left:280px;top:508px;" width="19" height="19" viewBox="0 0 19 19"><circle cx="9.5" cy="9.5" r="9.0" fill="none" stroke="#000" stroke-width="1"/></svg>
<div class="t" style="left:276px;width:27px;text-align:center;top:512.92px;font-size:12.5px;color:#000;">11</div>
<div class="t " style="left:304.4px;top:494.08px;font-size:12.9px;color:#000;">Publikationsnr.</div>
<div class="t " style="left:304.4px;top:510.78px;font-size:12.9px;color:#000;">Patentschrift:</div>
<div class="r" style="left:394px;top:495px;width:155px;height:25px;background:#fff;box-sizing:border-box;border:1px solid #7a7a7a;"></div>
<svg class="r" style="left:280px;top:534px;" width="19" height="19" viewBox="0 0 19 19"><circle cx="9.5" cy="9.5" r="9.0" fill="none" stroke="#000" stroke-width="1"/></svg>
<div class="t" style="left:276px;width:27px;text-align:center;top:538.92px;font-size:12.5px;color:#000;">47</div>
<div class="t " style="left:304.2px;top:537.78px;font-size:12.9px;color:#000;">Eintragungstag:</div>
<div class="r" style="left:449px;top:530px;width:100px;height:25px;background:#fff;box-sizing:border-box;border:1px solid #7a7a7a;"></div>
<div class="r" style="left:462px;top:546px;width:1px;height:2px;background:#200;"></div>
<div class="r" style="left:473px;top:546px;width:1px;height:2px;background:#200;"></div>
<div class="r" style="left:527px;top:533px;width:19px;height:19px;background:#e1e1e1;box-sizing:border-box;border:1px solid #adadad;"></div>
<svg class="r" style="left:531px;top:536px;" width="12" height="12" viewBox="0 0 12 12"><rect x="0" y="0" width="10" height="1" fill="#000"/><rect x="0" y="1" width="10" height="9" fill="#fff"/><rect x="10" y="1" width="1" height="10" fill="#000080"/><rect x="0" y="10" width="11" height="1" fill="#000080"/><rect x="2" y="3" width="1.6" height="6" fill="#000"/><rect x="1" y="3.6" width="1.2" height="1.2" fill="#000"/><rect x="1" y="8" width="3.6" height="1" fill="#000"/><path d="M5.3 3.5H8.7M5.8 3.5V6H7.8Q9 6 9 7.3Q9 8.5 7.6 8.5H5.2" stroke="#000" stroke-width="1.1" fill="none"/></svg>
<svg class="r" style="left:280px;top:561px;" width="19" height="19" viewBox="0 0 19 19"><circle cx="9.5" cy="9.5" r="9.0" fill="none" stroke="#000" stroke-width="1"/></svg>
<div class="t" style="left:276px;width:27px;text-align:center;top:565.92px;font-size:12.5px;color:#000;">24</div>
<div class="t " style="left:304.2px;top:564.38px;font-size:12.9px;color:#000;">Rechtskraft</div>
<div class="t " style="left:304.2px;top:581.38px;font-size:12.9px;color:#000;">eingetreten am:</div>
<div class="r" style="left:449px;top:570px;width:100px;height:25px;background:#fff;box-sizing:border-box;border:1px solid #7a7a7a;"></div>
<div class="r" style="left:462px;top:586px;width:1px;height:2px;background:#200;"></div>
<div class="r" style="left:473px;top:586px;width:1px;height:2px;background:#200;"></div>
<div class="r" style="left:527px;top:573px;width:19px;height:19px;background:#e1e1e1;box-sizing:border-box;border:1px solid #adadad;"></div>
<svg class="r" style="left:531px;top:576px;" width="12" height="12" viewBox="0 0 12 12"><rect x="0" y="0" width="10" height="1" fill="#000"/><rect x="0" y="1" width="10" height="9" fill="#fff"/><rect x="10" y="1" width="1" height="10" fill="#000080"/><rect x="0" y="10" width="11" height="1" fill="#000080"/><rect x="2" y="3" width="1.6" height="6" fill="#000"/><rect x="1" y="3.6" width="1.2" height="1.2" fill="#000"/><rect x="1" y="8" width="3.6" height="1" fill="#000"/><path d="M5.3 3.5H8.7M5.8 3.5V6H7.8Q9 6 9 7.3Q9 8.5 7.6 8.5H5.2" stroke="#000" stroke-width="1.1" fill="none"/></svg>
<div class="t " style="left:304.2px;top:608.08px;font-size:12.9px;color:#000;">Mögliche Laufzeit:</div>
<div class="r" style="left:449px;top:600px;width:100px;height:25px;background:#fff;box-sizing:border-box;border:1px solid #7a7a7a;"></div>
<div class="r" style="left:462px;top:616px;width:1px;height:2px;background:#200;"></div>
<div class="r" style="left:473px;top:616px;width:1px;height:2px;background:#200;"></div>
<div class="r" style="left:527px;top:603px;width:19px;height:19px;background:#e1e1e1;box-sizing:border-box;border:1px solid #adadad;"></div>
<svg class="r" style="left:531px;top:606px;" width="12" height="12" viewBox="0 0 12 12"><rect x="0" y="0" width="10" height="1" fill="#000"/><rect x="0" y="1" width="10" height="9" fill="#fff"/><rect x="10" y="1" width="1" height="10" fill="#000080"/><rect x="0" y="10" width="11" height="1" fill="#000080"/><rect x="2" y="3" width="1.6" height="6" fill="#000"/><rect x="1" y="3.6" width="1.2" height="1.2" fill="#000"/><rect x="1" y="8" width="3.6" height="1" fill="#000"/><path d="M5.3 3.5H8.7M5.8 3.5V6H7.8Q9 6 9 7.3Q9 8.5 7.6 8.5H5.2" stroke="#000" stroke-width="1.1" fill="none"/></svg>
<div class="t " style="left:304.2px;top:635.48px;font-size:12.9px;color:#000;">Biologisches Material</div>
<div class="r" style="left:449px;top:634px;width:13px;height:13px;background:#fff;box-sizing:border-box;border:1px solid #333;"></div>
<div class="t " style="left:304.2px;top:656.08px;font-size:12.9px;color:#000;">Veröffentlichungstag</div>
<div class="t " style="left:304.2px;top:672.58px;font-size:12.9px;color:#000;">des Recherchenbericht:</div>
<div class="r" style="left:449px;top:661px;width:100px;height:25px;background:#fff;box-sizing:border-box;border:1px solid #7a7a7a;"></div>
<div class="r" style="left:462px;top:677px;width:1px;height:2px;background:#200;"></div>
<div class="r" style="left:473px;top:677px;width:1px;height:2px;background:#200;"></div>
<div class="r" style="left:527px;top:664px;width:19px;height:19px;background:#e1e1e1;box-sizing:border-box;border:1px solid #adadad;"></div>
<svg class="r" style="left:531px;top:667px;" width="12" height="12" viewBox="0 0 12 12"><rect x="0" y="0" width="10" height="1" fill="#000"/><rect x="0" y="1" width="10" height="9" fill="#fff"/><rect x="10" y="1" width="1" height="10" fill="#000080"/><rect x="0" y="10" width="11" height="1" fill="#000080"/><rect x="2" y="3" width="1.6" height="6" fill="#000"/><rect x="1" y="3.6" width="1.2" height="1.2" fill="#000"/><rect x="1" y="8" width="3.6" height="1" fill="#000"/><path d="M5.3 3.5H8.7M5.8 3.5V6H7.8Q9 6 9 7.3Q9 8.5 7.6 8.5H5.2" stroke="#000" stroke-width="1.1" fill="none"/></svg>
<div class="r" style="left:280px;top:700px;width:269px;height:84px;box-sizing:border-box;border:1px solid #000;"></div>
<div class="r" style="left:286px;top:693px;width:52px;height:13px;background:#fff;"></div>
<div class="t " style="left:288px;top:694.78px;font-size:12.9px;color:#000;">Aufgabe</div>
<div class="t " style="left:285px;top:719.08px;font-size:12.9px;color:#000;">Schutzrecht erledigt</div>
<div class="r" style="left:402px;top:717px;width:13px;height:13px;background:#fff;box-sizing:border-box;border:1px solid #333;"></div>
<div class="t " style="left:418.7px;top:719.08px;font-size:12.9px;color:#000;">am:</div>
<div class="r" style="left:444px;top:711px;width:100px;height:25px;background:#fff;box-sizing:border-box;border:1px solid #7a7a7a;"></div>
<div class="r" style="left:457px;top:727px;width:1px;height:2px;background:#200;"></div>
<div class="r" style="left:468px;top:727px;width:1px;height:2px;background:#200;"></div>
<div class="r" style="left:522px;top:714px;width:19px;height:19px;background:#e1e1e1;box-sizing:border-box;border:1px solid #adadad;"></div>
<svg class="r" style="left:526px;top:717px;" width="12" height="12" viewBox="0 0 12 12"><rect x="0" y="0" width="10" height="1" fill="#000"/><rect x="0" y="1" width="10" height="9" fill="#fff"/><rect x="10" y="1" width="1" height="10" fill="#000080"/><rect x="0" y="10" width="11" height="1" fill="#000080"/><rect x="2" y="3" width="1.6" height="6" fill="#000"/><rect x="1" y="3.6" width="1.2" height="1.2" fill="#000"/><rect x="1" y="8" width="3.6" height="1" fill="#000"/><path d="M5.3 3.5H8.7M5.8 3.5V6H7.8Q9 6 9 7.3Q9 8.5 7.6 8.5H5.2" stroke="#000" stroke-width="1.1" fill="none"/></svg>
<div class="t " style="left:285px;top:741.08px;font-size:12.9px;color:#000;">Begründung:</div>
<div class="r" style="left:285px;top:757px;width:259px;height:25px;background:#fff;box-sizing:border-box;border:1px solid #7a7a7a;"></div>
<div class="r" style="left:522px;top:760px;width:19px;height:19px;background:#e1e1e1;box-sizing:border-box;border:1px solid #adadad;"></div>
<div class="r" style="left:526px;top:768px;width:2px;height:2px;background:#000;"></div>
<div class="r" style="left:530px;top:768px;width:2px;height:2px;background:#000;"></div>
<div class="r" style="left:534px;top:768px;width:2px;height:2px;background:#000;"></div>
<svg class="r" style="left:558px;top:468px;" width="19" height="19" viewBox="0 0 19 19"><circle cx="9.5" cy="9.5" r="9.0" fill="none" stroke="#000" stroke-width="1"/></svg>
<div class="t" style="left:554px;width:27px;text-align:center;top:472.92px;font-size:12.5px;color:#000;">87</div>
<div class="t " style="left:580.5px;top:463.88px;font-size:12.9px;color:#000;">Int. Veröffentlichungs-</div>
<div class="t " style="left:580.5px;top:480.98px;font-size:12.9px;color:#000;">Nr. / Daten:</div>
<div class="r" style="left:703px;top:465px;width:155px;height:25px;background:#fff;box-sizing:border-box;border:1px solid #7a7a7a;"></div>
<svg class="r" style="left:558px;top:503px;" width="19" height="19" viewBox="0 0 19 19"><circle cx="9.5" cy="9.5" r="9.0" fill="none" stroke="#000" stroke-width="1"/></svg>
<div class="t" style="left:554px;width:27px;text-align:center;top:507.92px;font-size:12.5px;color:#000;">86</div>
<div class="t " style="left:580.5px;top:499.08px;font-size:12.9px;color:#000;">Internationale</div>
<div class="t " style="left:580.5px;top:515.98px;font-size:12.9px;color:#000;">Anmelde-Nr.:</div>
<div class="r" style="left:703px;top:500px;width:155px;height:25px;background:#fff;box-sizing:border-box;border:1px solid #7a7a7a;"></div>
<svg class="r" style="left:558px;top:538px;" width="19" height="19" viewBox="0 0 19 19"><circle cx="9.5" cy="9.5" r="9.0" fill="none" stroke="#000" stroke-width="1"/></svg>
<div class="t" style="left:554px;width:27px;text-align:center;top:542.92px;font-size:12.5px;color:#000;">97</div>
<div class="t " style="left:577.5px;top:534.28px;font-size:12.9px;color:#000;">Nationale/Regionale</div>
<div class="t " style="left:577.5px;top:550.98px;font-size:12.9px;color:#000;">Veröffentlichungsnr.:</div>
<div class="r" style="left:703px;top:535px;width:155px;height:25px;background:#fff;box-sizing:border-box;border:1px solid #7a7a7a;"></div>
<svg class="r" style="left:558px;top:573px;" width="19" height="19" viewBox="0 0 19 19"><circle cx="9.5" cy="9.5" r="9.0" fill="none" stroke="#000" stroke-width="1"/></svg>
<div class="t" style="left:554px;width:27px;text-align:center;top:577.92px;font-size:12.5px;color:#000;">96</div>
<div class="t " style="left:577.5px;top:569.28px;font-size:12.9px;color:#000;">Nationales/</div>
<div class="t " style="left:577.5px;top:585.98px;font-size:12.9px;color:#000;">Regionales Akz.:</div>
<div class="r" style="left:703px;top:570px;width:155px;height:25px;background:#fff;box-sizing:border-box;border:1px solid #7a7a7a;"></div>
<div class="t " style="left:562px;top:647.68px;font-size:12.9px;color:#000;">max. Gesamtkosten:</div>
<div class="r" style="left:562px;top:664px;width:164px;height:25px;background:#fff;box-sizing:border-box;border:1px solid #7a7a7a;"></div>
<div class="r" style="left:704px;top:667px;width:19px;height:19px;background:#e1e1e1;box-sizing:border-box;border:1px solid #adadad;"></div>
<svg class="r" style="left:706px;top:669px;" width="14" height="14" viewBox="0 0 14 14"><rect x="0" y="1" width="13" height="12" fill="#008080"/><rect x="1" y="2" width="1" height="9" fill="#00ffff"/><rect x="1" y="2" width="11" height="1" fill="#00ffff"/><rect x="12" y="2" width="1" height="10" fill="#000080"/><rect x="1" y="10.5" width="12" height="1.5" fill="#000080"/><rect x="13" y="2" width="1" height="11" fill="#000"/><rect x="1" y="12" width="13" height="1" fill="#000"/><rect x="2.5" y="3" width="8" height="3" fill="#000"/><rect x="3.5" y="4" width="6.5" height="1.5" fill="#fff"/><rect x="2.5" y="6.8" width="9" height="1.2" fill="#000"/><rect x="2.5" y="8.8" width="9" height="1.2" fill="#000"/><path d="M4 7.4H5M6 7.4H7M8 7.4H9M10 7.4H11M4 9.4H5M6 9.4H7M8 9.4H9M10 9.4H11" stroke="#fff" stroke-width="1"/></svg>
<div class="r" style="left:870px;top:361px;width:19px;height:25px;background:#e1e1e1;box-sizing:border-box;border:1px solid #adadad;"></div>
<svg class="r" style="left:875px;top:372px;" width="9" height="6" viewBox="0 0 9 6"><path d="M0.5 0.5L4.5 4.5L8.5 0.5" stroke="#555" stroke-width="1" fill="none"/></svg>
<svg class="r" style="left:894px;top:364px;" width="19" height="19" viewBox="0 0 19 19"><circle cx="9.5" cy="9.5" r="9.0" fill="none" stroke="#000" stroke-width="1"/></svg>
<div class="t" style="left:890px;width:27px;text-align:center;top:368.92px;font-size:12.5px;color:#000;">51</div>
<div class="t " style="left:918.4px;top:369.28px;font-size:12.9px;color:#008000;">Internationale Klasse (IPC):</div>
<div class="r" style="left:870px;top:386px;width:416px;height:25px;background:#fff;box-sizing:border-box;border:1px solid #7a7a7a;"></div>
<div class="r" style="left:1264px;top:389px;width:19px;height:19px;background:#e1e1e1;box-sizing:border-box;border:1px solid #adadad;"></div>
<div class="r" style="left:1268px;top:397px;width:2px;height:2px;background:#000;"></div>
<div class="r" style="left:1272px;top:397px;width:2px;height:2px;background:#000;"></div>
<div class="r" style="left:1276px;top:397px;width:2px;height:2px;background:#000;"></div>
<div class="t " style="left:870.3px;top:424.28px;font-size:12.9px;color:#000;">Verfahrenssprache:</div>
<div class="r" style="left:986px;top:416px;width:29px;height:25px;background:#fff;box-sizing:border-box;border:1px solid #7a7a7a;"></div>
<div class="t " style="left:1074.2px;top:424.28px;font-size:12.9px;color:#000;">DAS:</div>
<div class="r" style="left:1106px;top:416px;width:180px;height:25px;background:#fff;box-sizing:border-box;border:1px solid #7a7a7a;"></div>
<div class="t " style="left:870.3px;top:450.08px;font-size:12.9px;color:#000;">Kurze Beschreibung</div>
<div class="r" style="left:870px;top:468px;width:419px;height:88px;background:#fff;box-sizing:border-box;border:1px solid #7a7a7a;"></div>
<div class="r" style="left:1271px;top:470px;width:16px;height:84px;background:#f0f0f0;"></div>
<svg class="r" style="left:1274px;top:476px;" width="10" height="7" viewBox="0 0 10 7"><path d="M1.3 5.5L4.8 2L8.3 5.5" stroke="#b4b4b4" stroke-width="1.9" fill="none"/></svg>
<svg class="r" style="left:1274px;top:542px;" width="10" height="7" viewBox="0 0 10 7"><path d="M1.3 1.5L4.8 5L8.3 1.5" stroke="#b4b4b4" stroke-width="1.9" fill="none"/></svg>
<div class="t " style="left:1730.5px;top:88.05px;font-size:15.3px;color:#000;">geöffnete Fenster</div>
<div class="t " style="left:1735.7px;top:114.38px;font-size:12.55px;color:#0a72d8;">Patente/GBM</div>
<div class="t " style="left:1730.5px;top:151.05px;font-size:15.3px;color:#000;">Akten Favoritenliste</div>
<div class="t " style="left:1735.7px;top:177.38px;font-size:12.55px;color:#0a72d8;"># Ändern/Löschen</div>
<div class="t " style="left:1735.7px;top:199.38px;font-size:12.55px;color:#0a72d8;">A1004 DE</div>
<div class="t " style="left:1735.7px;top:221.38px;font-size:12.55px;color:#0a72d8;">18.02855 WO</div>
<div class="t " style="left:1735.7px;top:243.38px;font-size:12.55px;color:#0a72d8;">EP1213561 EP</div>
<svg class="r" style="left:1890px;top:59px;" width="15" height="15" viewBox="0 0 15 15"><path d="M4.5 0.5H10.5L14.5 4.5V10.5L10.5 14.5H4.5L0.5 10.5V4.5Z" fill="none" stroke="#000" stroke-width="1"/><rect x="3.5" y="6.5" width="8" height="2" fill="#000"/></svg>
<svg class="r" style="left:1891px;top:89px;" width="13" height="12" viewBox="0 0 13 12"><rect x="0.5" y="0.5" width="12" height="11" fill="none" stroke="#000" stroke-width="1"/><rect x="2.5" y="5" width="8" height="2" fill="#000"/></svg>
<svg class="r" style="left:1891px;top:152px;" width="13" height="12" viewBox="0 0 13 12"><rect x="0.5" y="0.5" width="12" height="11" fill="none" stroke="#000" stroke-width="1"/><rect x="2.5" y="5" width="8" height="2" fill="#000"/></svg>
<svg class="r" style="left:270px;top:98px;" width="25" height="24" viewBox="0 0 25 24"><path d="M15.08 6.21L15.08 8.79L13.77 8.75L12.96 10.70L13.92 11.60L12.10 13.42L11.20 12.46L9.25 13.27L9.29 14.58L6.71 14.58L6.75 13.27L4.80 12.46L3.90 13.42L2.08 11.60L3.04 10.70L2.23 8.75L0.92 8.79L0.92 6.21L2.23 6.25L3.04 4.30L2.08 3.40L3.90 1.58L4.80 2.54L6.75 1.73L6.71 0.42L9.29 0.42L9.25 1.73L11.20 2.54L12.10 1.58L13.92 3.40L12.96 4.30L13.77 6.25Z" fill="#f2dc8a" stroke="#c8a848" stroke-width="0.8"/><circle cx="8" cy="7.5" r="1.7" fill="#fff" stroke="#b09040" stroke-width="0.6"/><path d="M23.67 14.10L23.67 16.90L22.26 16.85L21.38 18.97L22.41 19.94L20.44 21.91L19.47 20.88L17.35 21.76L17.40 23.17L14.60 23.17L14.65 21.76L12.53 20.88L11.56 21.91L9.59 19.94L10.62 18.97L9.74 16.85L8.33 16.90L8.33 14.10L9.74 14.15L10.62 12.03L9.59 11.06L11.56 9.09L12.53 10.12L14.65 9.24L14.60 7.83L17.40 7.83L17.35 9.24L19.47 10.12L20.44 9.09L22.41 11.06L21.38 12.03L22.26 14.15Z" fill="#6ab0f0" stroke="#3070c8" stroke-width="0.8"/><circle cx="16" cy="15.5" r="1.9" fill="#fff" stroke="#2860b0" stroke-width="0.6"/></svg>
<svg class="r" style="left:308px;top:98px;" width="24" height="24" viewBox="0 0 24 24"><path d="M1.5 0.5H15L20.5 6V22.5H1.5Z" fill="#eef4fc" stroke="#a0a8d0" stroke-width="1"/><path d="M15 0.5V6H20.5" fill="#fff" stroke="#a0a8d0" stroke-width="0.8"/></svg>
<svg class="r" style="left:343px;top:98px;" width="25" height="24" viewBox="0 0 25 24"><path d="M1.5 0.5H13L18.5 6V22.5H1.5Z" fill="#eef4fc" stroke="#a0a8d0" stroke-width="1"/><path d="M13 0.5V6H18.5" fill="#fff" stroke="#a0a8d0" stroke-width="0.8"/><path d="M7 21L9 16L20 4L23 7L12 19Z" fill="#a8a8e0" stroke="#6a6aa0" stroke-width="0.8"/><path d="M20 4L21.5 2.5Q22.5 1.5 23.5 2.5L24 3Q25 4 24 5L23 7Z" fill="#f06050"/><path d="M19 5L22 8" stroke="#f0d040" stroke-width="1.5"/><path d="M7 21L9 16L12 19Z" fill="#d8b060"/></svg>
<svg class="r" style="left:383px;top:99px;" width="22" height="22" viewBox="0 0 22 22"><rect x="0.5" y="0.5" width="21" height="21" rx="2" fill="#b4b4b4" stroke="#a0a0a0"/><rect x="4" y="0.5" width="14" height="9" fill="#e4e4e4"/><path d="M6 3H16M6 5H16M6 7H16" stroke="#c0c0c0" stroke-width="0.8"/><rect x="6" y="14" width="10" height="7.5" fill="#e8e8e8"/><rect x="7.5" y="15.5" width="3" height="5" fill="#a8a8a8"/></svg>
<svg class="r" style="left:416px;top:99px;" width="24" height="23" viewBox="0 0 24 23"><path d="M6 8Q12 2 17 5Q23 9 19 16L15 21" stroke="#a8a8a8" stroke-width="4" fill="none" stroke-linecap="round"/><path d="M1 1V12H11Z" fill="#a8a8a8" transform="rotate(-5 6 8)"/></svg>
<svg class="r" style="left:450px;top:100px;" width="23" height="20" viewBox="0 0 23 20"><path d="M11 2Q18 1 19 8" stroke="#3cb040" stroke-width="3.2" fill="none"/><path d="M14 8H23L18.5 14Z" fill="#3cb040"/><path d="M12 18Q5 19 4 12" stroke="#3cb040" stroke-width="3.2" fill="none"/><path d="M0 12H9L4.5 6Z" fill="#3cb040"/></svg>
<svg class="r" style="left:490px;top:98px;" width="23" height="24" viewBox="0 0 23 24"><path d="M0.5 0.5H10L13.5 4V17.5H0.5Z" fill="#e0e0e0" stroke="#c8c8c8" stroke-width="1"/><path d="M10 0.5V4H13.5" fill="#fff" stroke="#c8c8c8" stroke-width="0.8"/><path d="M7.5 6.5H18L21.5 10V23.5H7.5Z" fill="#e4e4e4" stroke="#c4c4c4" stroke-width="1"/><path d="M18 6.5V10H21.5" fill="#fff" stroke="#c4c4c4" stroke-width="0.8"/><path d="M10 14H19M10 17H19M10 20H19" stroke="#bcbcbc" stroke-width="1"/></svg>
<svg class="r" style="left:526px;top:98px;" width="19" height="24" viewBox="0 0 19 24"><path d="M2 2L12 16M12 0L9 16" stroke="#b8b8b8" stroke-width="2" fill="none"/><circle cx="5" cy="19.5" r="3.3" fill="none" stroke="#b0b0b0" stroke-width="1.6"/><circle cx="14" cy="17" r="3.3" fill="none" stroke="#b0b0b0" stroke-width="1.6"/></svg>
<svg class="r" style="left:559px;top:98px;" width="21" height="24" viewBox="0 0 21 24"><rect x="0.5" y="2" width="16" height="20" rx="2" fill="#d8d8d8" stroke="#c0c0c0"/><rect x="4.5" y="0.5" width="8" height="4" rx="1" fill="#e8e8e8" stroke="#c0c0c0"/><path d="M7.5 7.5H16.5L20.0 11V23.0H7.5Z" fill="#e8e8e8" stroke="#c0c0c0" stroke-width="1"/><path d="M16.5 7.5V11H20.0" fill="#fff" stroke="#c0c0c0" stroke-width="0.8"/><path d="M10 14H18M10 17H18M10 20H18" stroke="#bcbcbc" stroke-width="1"/></svg>
<svg class="r" style="left:597px;top:98px;" width="24" height="23" viewBox="0 0 24 23"><path d="M2.5 1.5L9.5 0.5L13 5L14 10L8 11L6 6Z" fill="#d4e6fa" stroke="#a8a8dc" stroke-width="0.8"/><path d="M0.5 14L12 8.5L22 12.5L10.5 18Z" fill="#f4f4f4" stroke="#a0a0a0" stroke-width="0.8"/><path d="M0.5 14L10.5 18V22L0.5 18Z" fill="#dcdcdc" stroke="#a0a0a0" stroke-width="0.8"/><path d="M10.5 18L22 12.5V16.5L10.5 22Z" fill="#c4c4c4" stroke="#909090" stroke-width="0.8"/><path d="M10 17L20 12.8" stroke="#222" stroke-width="1.4"/><path d="M7 14L14 11" stroke="#b0b0b0" stroke-width="0.8"/></svg>
<svg class="r" style="left:635px;top:98px;" width="24" height="24" viewBox="0 0 24 24"><path d="M0.5 0.5H12L16.5 5V21.5H0.5Z" fill="#eef4fc" stroke="#a0a8d0" stroke-width="1"/><path d="M12 0.5V5H16.5" fill="#fff" stroke="#a0a8d0" stroke-width="0.8"/><rect x="9.5" y="9.5" width="14" height="14" fill="#fff" stroke="#3a50b0" stroke-width="1"/><text x="16.5" y="21" text-anchor="middle" font-family="Liberation Sans" font-weight="bold" font-size="10" fill="#3a50b0">W</text></svg>
<svg class="r" style="left:668px;top:99px;" width="25" height="21" viewBox="0 0 25 21"><rect x="0.5" y="11.5" width="5" height="8" fill="#666" stroke="#333" stroke-width="0.8"/><path d="M5.5 13H11Q17 11 22 13.5Q20 18 14 18.5H5.5Z" fill="#f8e0b8" stroke="#b06040" stroke-width="0.8"/><defs><radialGradient id="rg3" cx="0.4" cy="0.35" r="0.7"><stop offset="0" stop-color="#f89080"/><stop offset="1" stop-color="#d83a28"/></radialGradient></defs><circle cx="17.3" cy="8.3" r="7.2" fill="url(#rg3)"/><path d="M14 5L20.6 11.6M20.6 5L14 11.6" stroke="#fff" stroke-width="1.8"/></svg>
<svg class="r" style="left:703px;top:98px;" width="24" height="24" viewBox="0 0 24 24"><path d="M3 6L10 2L14 4L7 8Z" fill="#f4f8fe" stroke="#8090d0" stroke-width="0.7"/><path d="M6 8L13 4L17 6L10 10Z" fill="#f4f8fe" stroke="#8090d0" stroke-width="0.7"/><path d="M9 10L16 6L20 8.5L13 12.5Z" fill="#e8f2fe" stroke="#8090d0" stroke-width="0.7"/><path d="M13 10L18 8" stroke="#60a0e8" stroke-width="1.6"/><path d="M0.5 9L12 15.5L12 22.5L0.5 16Z" fill="#f8e080" stroke="#c8a030" stroke-width="0.8"/><path d="M12 15.5L23.5 9V16L12 22.5Z" fill="#e8c050" stroke="#c8a030" stroke-width="0.8"/><path d="M0.5 9L3 8L12 13L21 8L23.5 9L12 15.5Z" fill="#fcf0b0" stroke="#c8a030" stroke-width="0.6"/></svg>
<svg class="r" style="left:742px;top:98px;" width="24" height="24" viewBox="0 0 24 24"><circle cx="12" cy="12" r="11" fill="#f4f4f4" stroke="#c8c8c8" stroke-width="1.6"/><circle cx="12" cy="12" r="9" fill="#fff"/><path d="M12 4.5V12L16 16" stroke="#555" stroke-width="0.9" fill="none"/><path d="M5 12H12" stroke="#e06060" stroke-width="0.9"/></svg>
<svg class="r" style="left:775px;top:98px;" width="24" height="24" viewBox="0 0 24 24"><path d="M5.5 0.5H17L22.5 6V23.5H5.5Z" fill="#eef4fc" stroke="#a0a8d0" stroke-width="1"/><path d="M17 0.5V6H22.5" fill="#fff" stroke="#a0a8d0" stroke-width="0.8"/><circle cx="7" cy="7" r="6" fill="#e8f4fc" stroke="#3a70c8" stroke-width="1.3"/><path d="M7 3.5V7L10 4" stroke="#333" stroke-width="0.9" fill="none"/></svg>
<svg class="r" style="left:810px;top:98px;" width="24" height="24" viewBox="0 0 24 24"><path d="M0.5 2.5H8L10 4.5H19.5V20H0.5Z" fill="#f0d890" stroke="#d8b050" stroke-width="0.8"/><path d="M0.5 20L3 8H23L19.5 20Z" fill="#fae8a8" stroke="#d8b050" stroke-width="0.8"/><circle cx="17" cy="17" r="6.2" fill="#e8f4fc" stroke="#3a70c8" stroke-width="1.4"/><path d="M17 13.5V17L20 14" stroke="#333" stroke-width="0.9" fill="none"/></svg>
<svg class="r" style="left:849px;top:98px;" width="24" height="24" viewBox="0 0 24 24"><path d="M6 8L14.5 1L23 8V19H6Z" fill="#eef4fc" stroke="#a0a8d0" stroke-width="0.8"/><path d="M14 12H21M14 15H21" stroke="#5a9ae0" stroke-width="1.2"/><path d="M1.5 7.5H10L13.5 11V22.5H1.5Z" fill="#eef4fc" stroke="#a0a8d0" stroke-width="1"/><path d="M10 7.5V11H13.5" fill="#fff" stroke="#a0a8d0" stroke-width="0.8"/></svg>
<svg class="r" style="left:883px;top:98px;" width="24" height="24" viewBox="0 0 24 24"><rect x="0.5" y="0.5" width="20" height="15" fill="#eef2fa" stroke="#8a90c8"/><rect x="13" y="2" width="6" height="4" fill="#f0a060"/><path d="M4 8H12M4 10.5H10" stroke="#80a8e0"/><circle cx="15.5" cy="16" r="7.8" fill="#40b040" stroke="#2a8a2a" stroke-width="0.6"/><path d="M11.5 16L14.5 19L20 12.5" stroke="#fff" stroke-width="2" fill="none"/></svg>
<svg class="r" style="left:917px;top:98px;" width="24" height="24" viewBox="0 0 24 24"><path d="M23 1Q15 2 9 11L6 15L9 18L13 15Q22 9 23 1Z" fill="#e83838" stroke="#555" stroke-width="0.9"/><circle cx="16.5" cy="7.5" r="1.8" fill="#fff" stroke="#555" stroke-width="0.6"/><path d="M9 11L4 11L2 14L6 15ZM13 15L13 20L10 22L9 18Z" fill="#e83838" stroke="#555" stroke-width="0.7"/><path d="M6 18L1 23L4 18.5Z" fill="#f0d040" stroke="#555" stroke-width="0.6"/></svg>
<svg class="r" style="left:952px;top:99px;" width="23" height="23" viewBox="0 0 23 23"><rect x="0.75" y="0.75" width="20.5" height="20.5" fill="#f8f0f0" stroke="#e04848" stroke-width="1.5"/><path d="M11 4Q9 4 10 9L6 16Q4 18 6 18Q8 18 11 12Q15 11 17 13Q19 13 17 11Q14 10 11 12Q9 9 11 4Z" fill="none" stroke="#e05050" stroke-width="1.2"/></svg>
<svg class="r" style="left:990px;top:98px;" width="24" height="24" viewBox="0 0 24 24"><circle cx="12" cy="12" r="11.3" fill="#e8e8e8" stroke="#a8a8a8" stroke-width="1.2"/><circle cx="12" cy="12" r="8.5" fill="#d8ecf8" stroke="#bbb" stroke-width="0.6"/><path d="M13 4Q5 4 3 13" stroke="#40b040" stroke-width="3.5" fill="none"/><path d="M0 11H8L4 17Z" fill="#40b040"/><path d="M11 13L17 7" stroke="#333" stroke-width="1"/></svg>
<svg class="r" style="left:1025px;top:98px;" width="23" height="24" viewBox="0 0 23 24"><path d="M0.5 3V19Q0.5 22 7 22Q13.5 22 13.5 19V3" fill="#f0d070" stroke="#c8a040" stroke-width="0.8"/><ellipse cx="7" cy="3" rx="6.5" ry="2.5" fill="#f8e8a0" stroke="#c8a040" stroke-width="0.8"/><path d="M0.5 11Q0.5 14 7 14Q13.5 14 13.5 11" fill="none" stroke="#c8a040" stroke-width="0.8"/><circle cx="15" cy="16" r="7.3" fill="#40b040" stroke="#2a8a2a" stroke-width="0.6"/><path d="M12.5 12V20L19 16Z" fill="#fff"/></svg>
<svg class="r" style="left:1058px;top:98px;" width="24" height="24" viewBox="0 0 24 24"><circle cx="11" cy="11" r="10.3" fill="#4a90d8" stroke="#2a5aa8" stroke-width="0.8"/><path d="M6 3Q10 6 8 10Q12 12 9 18M14 2Q16 6 19 8" stroke="#58b058" stroke-width="2.5" fill="none"/><path d="M4 6Q9 14 13 13L11 10L17 13L13 17V14" fill="#f09040" stroke="#c06020" stroke-width="0.6"/><rect x="12.5" y="10.5" width="11" height="8" fill="#90d0f8" stroke="#4a80b8"/><path d="M15 21H21M18 18.5V21" stroke="#888" stroke-width="1.5"/></svg>
<div class="t" style="left:1096.5px;top:104.5px;font-size:7.2px;font-weight:bold;color:#6a7078;letter-spacing:0.1px;">PAVIS</div>
<div class="r" style="left:1118px;top:110px;width:3px;height:3px;background:#e03050;"></div>
<svg class="r" style="left:1132px;top:99px;" width="22" height="22" viewBox="0 0 22 22"><circle cx="11" cy="11" r="11" fill="#949494"/></svg>
<svg class="r" style="left:1170px;top:98px;" width="24" height="23" viewBox="0 0 24 23"><path d="M0.5 1.5H6L8 3.5H15V16H0.5Z" fill="#f4dc90" stroke="#d8b050" stroke-width="0.8"/><path d="M6 7H12L14 9H22V22H6Z" fill="#f8e4a0" stroke="#d8b050" stroke-width="0.8"/><path d="M6 22L8.5 13H23.5L21 22Z" fill="#fcf0c0" stroke="#d8b050" stroke-width="0.8"/></svg>
<svg class="r" style="left:1204px;top:98px;" width="24" height="24" viewBox="0 0 24 24"><defs><radialGradient id="rg2" cx="0.4" cy="0.3" r="0.8"><stop offset="0" stop-color="#a8d4ff"/><stop offset="1" stop-color="#2a78d8"/></radialGradient></defs><circle cx="12" cy="12" r="11.5" fill="url(#rg2)" stroke="#2860b8" stroke-width="0.8"/><path d="M12 3.5L14.3 9.3H20.3L15.5 13L17.3 19L12 15.5L6.7 19L8.5 13L3.7 9.3H9.7Z" fill="#fff"/></svg>
</body></html>
